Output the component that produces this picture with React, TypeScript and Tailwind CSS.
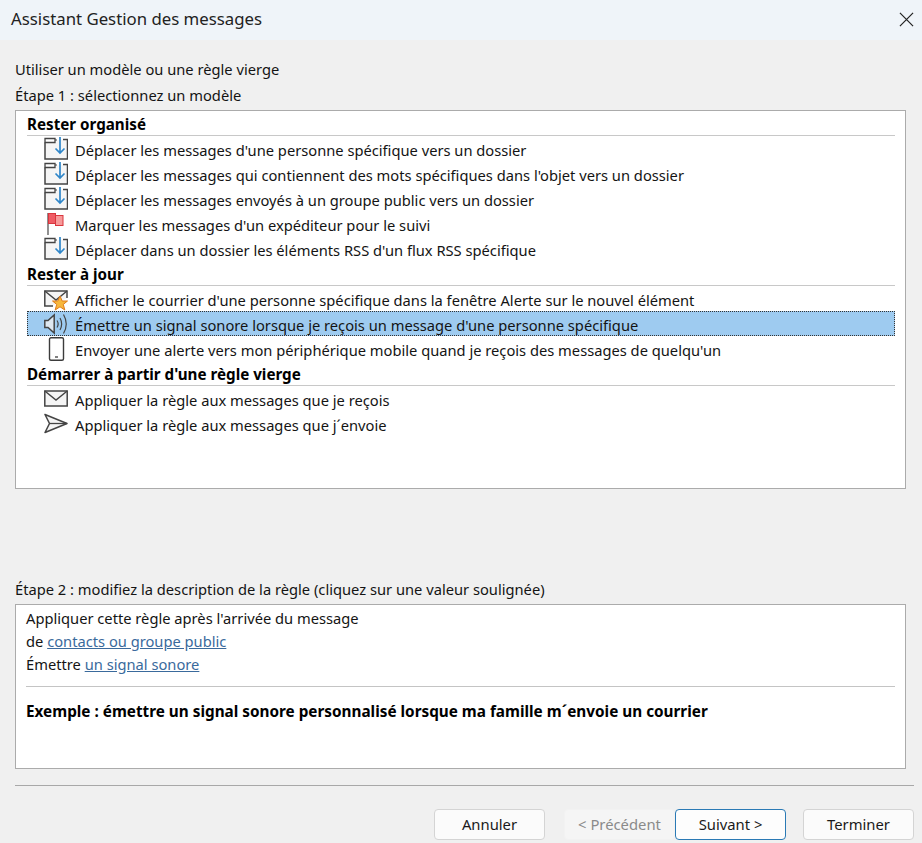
import { ReactNode } from 'react';

const FONT = 'font-["Noto_Sans",sans-serif]';

function MoveIcon() {
  return (
    <svg width="24" height="24" viewBox="0 0 24 24" fill="none">
      <path d="M1 5.5V22H23.5V2.5H19" stroke="#444" strokeWidth="1.5" fill="#f5f5f5" />
      <path d="M1 5.5V1.5H11V5.5H1Z" stroke="#444" strokeWidth="1.3" fill="#fff" />
      <path d="M11 3H13" stroke="#444" strokeWidth="1.2" />
      <path d="M16 0V16M11.5 11.5L16 16L20.5 11.5" stroke="#2f86c9" strokeWidth="1.7" />
    </svg>
  );
}

function FlagIcon() {
  return (
    <svg width="24" height="24" viewBox="0 0 24 24" fill="none">
      <path d="M4 1V23" stroke="#555" strokeWidth="1.3" />
      <rect x="4.5" y="1.5" width="7" height="10" fill="#ef5b64" stroke="#d9363e" />
      <rect x="11.5" y="3.5" width="7.5" height="10" fill="#f79a9a" stroke="#d9363e" />
    </svg>
  );
}

function MailStarIcon() {
  return (
    <svg width="24" height="24" viewBox="0 0 24 24" fill="none">
      <path d="M9 19H0.8V4H23V11" stroke="#444" strokeWidth="1.5" fill="#f5f5f5" />
      <path d="M0.8 4L12 13L23 4" stroke="#444" strokeWidth="1.4" />
      <path d="M16 9L18.2 14H23.5L19.3 17.4L20.8 23L16 19.8L11.2 23L12.7 17.4L8.5 14H13.8Z" fill="#f7b73c" stroke="#e07b1a" strokeWidth="1" />
    </svg>
  );
}

function SoundIcon() {
  return (
    <svg width="24" height="24" viewBox="0 0 24 24" fill="none">
      <path d="M0.8 8.5V15.5H4L10.2 21V3L4 8.5H0.8Z" fill="#dfe8f0" stroke="#444" strokeWidth="1.5" />
      <path d="M13 8.5Q15.3 12 13 15.5M16 6Q19.3 12 16 18M19.5 2.5Q25 12 19.5 21.5" stroke="#444" strokeWidth="1.2" />
    </svg>
  );
}

function PhoneIcon() {
  return (
    <svg width="24" height="24" viewBox="0 0 24 24" fill="none">
      <rect x="5.5" y="0.7" width="14" height="22.6" rx="1.5" fill="#fff" stroke="#3c3c3c" strokeWidth="1.4" />
      <path d="M11 20H14" stroke="#3c3c3c" strokeWidth="1.3" />
    </svg>
  );
}

function MailIcon() {
  return (
    <svg width="24" height="24" viewBox="0 0 24 24" fill="none">
      <rect x="0.8" y="4" width="22.4" height="15" fill="#f5f5f5" stroke="#444" strokeWidth="1.5" />
      <path d="M0.8 4L12 13L23.2 4" stroke="#444" strokeWidth="1.4" />
    </svg>
  );
}

function SendIcon() {
  return (
    <svg width="24" height="24" viewBox="0 0 24 24" fill="none">
      <path d="M1 2.5L23 11.5L1 20.5L5.5 11.5L1 2.5Z" fill="#f5f5f5" stroke="#444" strokeWidth="1.5" strokeLinejoin="round" />
      <path d="M5.5 11.5H23" stroke="#444" strokeWidth="1.3" />
    </svg>
  );
}

function GroupHead({ children }: { children: ReactNode }) {
  return (
    <div className="ml-[11px] mr-[10px] h-[25px] border-b border-[#c8c8c8] flex items-end pb-px">
      <span className="text-[15.2px] font-bold leading-[20px] text-black">{children}</span>
    </div>
  );
}

function Row({ icon, text, selected }: { icon: ReactNode; text: string; selected?: boolean }) {
  return (
    <div className={'ml-[11px] mr-[10px] h-[25px] flex items-center pl-[17px] ' + (selected ? 'bg-[#9ecbf0] border border-dotted border-[#333]' : '')}>
      <span className={selected ? 'w-[31px] shrink-0 -ml-px' : 'w-[31px] shrink-0'}>{icon}</span>
      <span className="whitespace-nowrap text-[#141414] pt-[3px]">{text}</span>
    </div>
  );
}

function Btn({ label, kind }: { label: string; kind?: 'primary' | 'disabled' }) {
  let cls = 'border-[#d4d4d4] bg-[#fbfbfb] text-[#1a1a1a]';
  if (kind === 'primary') cls = 'border-[#2a7ab5] bg-[#fdfdfd] text-[#1a1a1a]';
  if (kind === 'disabled') cls = 'border-[#f2f2f2] bg-[#f5f5f5] text-[#8a8a8a]';
  return (
    <button className={'w-[111px] h-[31px] rounded-[4px] border text-[14.8px] flex items-center justify-center ' + cls}>
      {label}
    </button>
  );
}

export default function App() {
  return (
    <div className={'w-[922px] h-[843px] overflow-hidden bg-[#f0f0f0] text-[14.7px] text-[#141414] ' + FONT}>
      <div className="h-10 bg-[#eff4f9] flex items-center justify-between pl-[11px] pr-[8px] pb-[2px]">
        <span className="text-[16.8px] text-[#222]">Assistant Gestion des messages</span>
        <svg width="15" height="15" viewBox="0 0 16 16" fill="none">
          <path d="M1 1L15 15M15 1L1 15" stroke="#222" strokeWidth="1.3" />
        </svg>
      </div>

      <div className="pl-[15px] pr-[16px]">
        <div className="mt-[20px] h-[25px] leading-[18px]">Utiliser un modèle ou une règle vierge</div>
        <div className="h-[25px] leading-[20px]">Étape 1 : sélectionnez un modèle</div>

        <div className="h-[379px] bg-white border border-[#ababab] overflow-hidden">
          <GroupHead>Rester organisé</GroupHead>
          <Row icon={<MoveIcon />} text="Déplacer les messages d'une personne spécifique vers un dossier" />
          <Row icon={<MoveIcon />} text="Déplacer les messages qui contiennent des mots spécifiques dans l'objet vers un dossier" />
          <Row icon={<MoveIcon />} text="Déplacer les messages envoyés à un groupe public vers un dossier" />
          <Row icon={<FlagIcon />} text="Marquer les messages d'un expéditeur pour le suivi" />
          <Row icon={<MoveIcon />} text="Déplacer dans un dossier les éléments RSS d'un flux RSS spécifique" />
          <GroupHead>Rester à jour</GroupHead>
          <Row icon={<MailStarIcon />} text="Afficher le courrier d'une personne spécifique dans la fenêtre Alerte sur le nouvel élément" />
          <Row selected icon={<SoundIcon />} text="Émettre un signal sonore lorsque je reçois un message d'une personne spécifique" />
          <Row icon={<PhoneIcon />} text="Envoyer une alerte vers mon périphérique mobile quand je reçois des messages de quelqu'un" />
          <GroupHead>Démarrer à partir d'une règle vierge</GroupHead>
          <Row icon={<MailIcon />} text="Appliquer la règle aux messages que je reçois" />
          <Row icon={<SendIcon />} text="Appliquer la règle aux messages que j´envoie" />
        </div>

        <div className="mt-[91px] h-[24px] leading-[18px]">Étape 2 : modifiez la description de la règle (cliquez sur une valeur soulignée)</div>

        <div className="h-[165px] bg-white border border-[#ababab] pl-[10px] pr-[10px] pt-[2px]">
          <div className="h-[23px] leading-[23px]">Appliquer cette règle après l'arrivée du message</div>
          <div className="h-[23px] leading-[23px]">de <a className="text-[#3a6a9c] underline">contacts ou groupe public</a></div>
          <div className="h-[23px] leading-[23px]">Émettre <a className="text-[#3a6a9c] underline">un signal sonore</a></div>
          <div className="mt-[10px] border-t border-[#c4c4c4]" />
          <div className="mt-[14px] text-[15.3px] font-bold leading-[20px] text-black">Exemple : émettre un signal sonore personnalisé lorsque ma famille m´envoie un courrier</div>
        </div>

        <div className="mt-[16px] border-t border-[#a8a8a8] -mr-[8px]" />

        <div className="mt-[23px] flex justify-end -mr-[8px]">
          <Btn label="Annuler" />
          <div className="w-[19px]" />
          <Btn label="< Précédent" kind="disabled" />
          <Btn label="Suivant >" kind="primary" />
          <div className="w-[17px]" />
          <Btn label="Terminer" />
        </div>
      </div>
    </div>
  );
}
